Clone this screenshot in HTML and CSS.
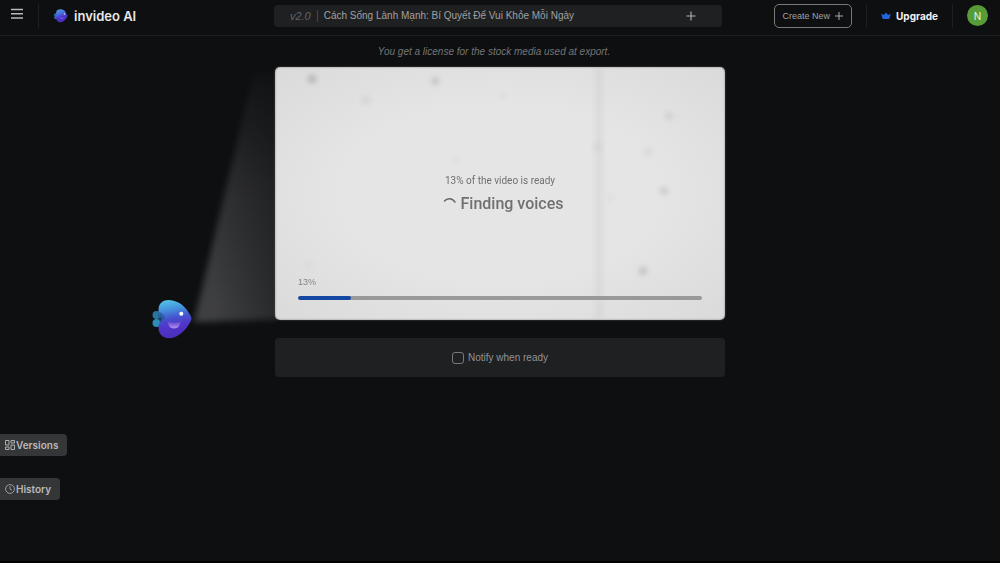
FILE: index.html
```html
<!DOCTYPE html>
<html lang="en">
<head>
<meta charset="utf-8">
<meta name="viewport" content="width=device-width, initial-scale=1">
<title>invideo AI</title>
<link rel="stylesheet" href="styles.css">
</head>
<body>
<div class="page">
  <header class="topbar">
    <div class="topbar-left">
      <button class="icon-button" type="button" aria-label="Menu">
        <svg width="14" height="12" viewBox="0 0 14 12" fill="none" stroke="#b8b9ba" stroke-width="1.4"><path d="M1 1.5h12M1 5.700h12M1 10h12"/></svg>
      </button>
      <span class="divider"></span>
      <a class="brand" href="#">
        <svg width="16" height="16" viewBox="0 0 16 16">
          <defs>
            <linearGradient id="logo" x1="0" y1="0" x2="0.3" y2="1"><stop offset="0" stop-color="#49a6dc"/><stop offset="0.4" stop-color="#4a6fdc"/><stop offset="0.7" stop-color="#4b35c8"/><stop offset="1" stop-color="#4a2fbd"/></linearGradient>
          </defs>
          <circle cx="2.600" cy="7" r="1.800" fill="#236d9e"/><circle cx="2.800" cy="9.500" r="1.800" fill="#2a5fae"/>
          <path d="M3.300 4C3.300 1.800 5.500 1 8 1.200c3 .3 5 2 5 4.200 1.200 1.200 2 2.200 1.200 3.600-.8 1.500-2 2.800-3.700 4.200C8.500 14.600 5.500 14.800 4 12.500 3 11 2.600 9.500 2.800 8 2.800 6.700 3 5.300 3.300 4z" fill="url(#logo)"/>
          <circle cx="11.500" cy="6" r=".7" fill="#dcecff"/><path d="M6.500 9.300q2.400 1.300 4.500 0-.6 1.800-2.300 1.800-1.700 0-2.200-1.800z" fill="#8068e4"/>
        </svg>
        <span>invideo AI</span>
      </a>
    </div>
    <div class="titlebar">
      <span class="version">v2.0</span>
      <span class="title">Cách Sống Lành Mạnh: Bí Quyết Để Vui Khỏe Mỗi Ngày</span>
      <button class="icon-button" type="button" aria-label="Add">
        <svg width="10" height="10" viewBox="0 0 10 10" stroke="#b4b4b5" stroke-width="1.1"><path d="M5 .5v9M.5 5h9"/></svg>
      </button>
    </div>
    <div class="topbar-right">
      <button class="create" type="button">Create New
        <svg width="8" height="8" viewBox="0 0 8 8" stroke="#a9aaab" stroke-width="1"><path d="M4 0v8M0 4h8"/></svg>
      </button>
      <span class="divider"></span>
      <a class="upgrade" href="#">
        <svg width="10" height="8" viewBox="0 0 10 8" fill="#2463dc"><path d="M.3 1.700 2.800 3 5 .4 7.200 3l2.500-1.300-1 4.300a1.400 1.400 0 0 1-1.400 1.100H2.700A1.400 1.400 0 0 1 1.300 6z"/></svg>
        <span>Upgrade</span>
      </a>
      <span class="divider"></span>
      <button class="avatar" type="button">N</button>
    </div>
  </header>

  <div class="workspace">
    <nav class="side">
      <button class="tab" type="button">
        <svg width="10" height="10" viewBox="0 0 10 10" fill="none" stroke="#b0b0b0" stroke-width="1"><path d="M.5.5h3.500v4.500H.5zM.5 7h3.500v2.500H.5zM6 .5h3.500V3H6zM6 5h3.500v4.500H6z"/></svg>Versions
      </button>
      <button class="tab" type="button">
        <svg width="10" height="10" viewBox="0 0 10 10" fill="none" stroke="#a8a8a8" stroke-width=".9"><circle cx="5" cy="5" r="4.400"/><path d="M5 2.300V5l2 1.200"/></svg>History
      </button>
    </nav>

    <main class="main">
      <p class="license">You get a license for the stock media used at export.</p>
      <div class="stage">
        <svg class="projector" width="135" height="285" viewBox="142 60 135 285" aria-hidden="true">
          <defs>
            <linearGradient id="beam" gradientUnits="userSpaceOnUse" x1="205" y1="322" x2="265" y2="70"><stop offset="0" stop-color="#fff" stop-opacity=".21"/><stop offset=".5" stop-color="#fff" stop-opacity=".15"/><stop offset="1" stop-color="#fff" stop-opacity=".02"/></linearGradient>
            <linearGradient id="shade" gradientUnits="userSpaceOnUse" x1="215" y1="0" x2="277" y2="0"><stop offset="0" stop-color="#0e0f11" stop-opacity="0"/><stop offset="1" stop-color="#0e0f11" stop-opacity=".45"/></linearGradient>
            <filter id="soft" x="-20%" y="-10%" width="140%" height="120%" color-interpolation-filters="sRGB"><feGaussianBlur stdDeviation="3"/></filter>
            <linearGradient id="fish" x1=".2" y1="0" x2=".35" y2="1"><stop offset="0" stop-color="#54c3e6"/><stop offset=".25" stop-color="#4593dd"/><stop offset=".5" stop-color="#4550cc"/><stop offset=".72" stop-color="#5033c8"/><stop offset="1" stop-color="#4c2fba"/></linearGradient>
            <linearGradient id="mouth" x1="0" y1="0" x2="0" y2="1"><stop offset="0" stop-color="#5a3bd0"/><stop offset="1" stop-color="#b095ee"/></linearGradient>
          </defs>
          <g filter="url(#soft)"><path d="M194 322 254 72H285V319z" fill="url(#beam)"/></g>
          <path d="M215 60H277V330H215z" fill="url(#shade)"/>
          <circle cx="156.500" cy="315" r="4" fill="#28759d"/><circle cx="156.500" cy="323" r="4" fill="#2d8cb9"/>
          <path d="M158.500 310C158.500 303 163 300 169 300 179 300.500 186 307 189.500 314 191.500 317 192 318 191 320.500 187 329 179 337.500 169.500 338.300 162 338.500 158 333 158.500 326.500 159 323 160.500 321 162 319 159.500 316.500 158.500 313.500 158.500 310z" fill="url(#fish)"/>
          <path d="M158.600 312Q164 313 165 318.500 162.500 319.500 160.500 322.500 157 320 158.600 312z" fill="#1d5992" opacity=".65"/>
          <circle cx="181.300" cy="313.700" r="2" fill="#fff"/>
          <path d="M167.300 321Q174 324.500 180.700 321 180 328.500 174 328.500 168.300 328.500 167.300 321z" fill="url(#mouth)"/>
        </svg>
        <section class="screen">
          <svg class="film" viewBox="275 67 450 253" preserveAspectRatio="none" aria-hidden="true">
            <defs>
              <filter id="blur" x="-100%" y="-100%" width="300%" height="300%" color-interpolation-filters="sRGB"><feGaussianBlur stdDeviation="2.500"/></filter>
              <linearGradient id="scratch" x1="0" y1="0" x2="1" y2="0"><stop offset="0" stop-color="#c4c4c4" stop-opacity="0"/><stop offset=".5" stop-color="#c4c4c4" stop-opacity=".28"/><stop offset="1" stop-color="#c4c4c4" stop-opacity="0"/></linearGradient>
            </defs>
            <rect x="591" y="67" width="16" height="253" fill="url(#scratch)"/>
            <g filter="url(#blur)" fill="#bababa">
              <circle cx="312" cy="79" r="4.500"/><circle cx="435" cy="81" r="4" opacity=".7"/><circle cx="366" cy="100" r="4" opacity=".3"/>
              <circle cx="669" cy="116" r="4" opacity=".4"/><circle cx="648" cy="152" r="4" opacity=".3"/><circle cx="664" cy="191" r="4" opacity=".6"/>
              <circle cx="643" cy="271" r="4.500" opacity=".7"/><circle cx="598" cy="147" r="4" opacity=".25"/><circle cx="456" cy="160" r="3" opacity=".2"/><circle cx="610" cy="198" r="3" opacity=".2"/><circle cx="309" cy="265" r="3" opacity=".2"/><circle cx="503" cy="96" r="3" opacity=".2"/>
            </g>
          </svg>
          <div class="status">
            <p class="ready">13% of the video is ready</p>
            <h1 class="step">
              <svg width="14" height="14" viewBox="0 0 14 14" fill="none" stroke="#666" stroke-width="1.500" stroke-linecap="round"><path d="M1.500 4C4 .8 9 .6 12 5"/></svg>
              <span>Finding voices</span>
            </h1>
          </div>
          <div class="progress">
            <label for="progress">13%</label>
            <progress id="progress" class="bar" value="13" max="100"></progress>
          </div>
        </section>
      </div>
      <label class="notify"><input type="checkbox">Notify when ready</label>
    </main>
  </div>
</div>
</body>
</html>
```
FILE: styles.css
```css
* {
  box-sizing: border-box;
}

body {
  margin: 0;
  background: #0e0f11;
  color: #a0a1a2;
  font-family: "Liberation Sans", Arial, sans-serif;
  font-size: 10px;
}

button {
  font: inherit;
  color: inherit;
  border: 0;
  padding: 0;
  background: none;
}

a {
  color: inherit;
  text-decoration: none;
}

p,
h1 {
  margin: 0;
}

svg {
  display: block;
  flex: none;
}

.page {
  display: flex;
  flex-direction: column;
  min-height: 100vh;
  border-bottom: 2px solid #000;
}

.topbar {
  display: grid;
  grid-template-columns: 1fr 45% 1fr;
  align-items: center;
  height: 36px;
  padding: 0 4px 4px 0;
  border-bottom: 1px solid #1d1e20;
}

.topbar-left,
.topbar-right {
  display: flex;
  align-items: center;
}

.topbar-left {
  gap: 14px;
  padding-left: 10px;
}

.topbar-left .icon-button {
  padding-bottom: 4px;
}

.topbar-right {
  justify-content: flex-end;
  gap: 14px;
  padding-right: 8px;
}

.divider {
  width: 1px;
  height: 24px;
  background: #1e2022;
}

.brand,
.upgrade,
.avatar,
.tab {
  font-family: Inter, "Liberation Sans", sans-serif;
}

.brand {
  display: flex;
  align-items: center;
  gap: 5px;
  color: #e8e8e8;
  font-size: 13px;
  font-weight: 600;
}

.titlebar {
  display: flex;
  align-items: center;
  height: 22px;
  padding: 0 26px 0 16px;
  border-radius: 4px;
  background: #1f2022;
}

.version {
  padding-right: 6px;
  border-right: 1px solid #444547;
  color: #636466;
  font-size: 11px;
  font-style: italic;
}

.title {
  flex: 1;
  padding-left: 6px;
}

.create {
  display: flex;
  align-items: center;
  gap: 5px;
  height: 24px;
  padding: 0 8px;
  border: 1px solid #77787a;
  border-radius: 5px;
  font-size: 9px;
}

.upgrade {
  display: flex;
  align-items: center;
  gap: 5px;
  color: #f2f2f2;
  font-weight: 700;
}

.avatar {
  width: 21px;
  height: 21px;
  border-radius: 50%;
  background: #589c37;
  color: #e7f2e0;
}

.workspace {
  display: grid;
  grid-template-columns: 1fr 45% 1fr;
}

.side {
  display: flex;
  flex-direction: column;
  align-items: flex-start;
  gap: 22px;
  padding-top: 398px;
}

.tab {
  display: flex;
  align-items: center;
  gap: 1px;
  height: 22px;
  padding: 0 9px 0 5px;
  border-radius: 0 4px 4px 0;
  background: #353637;
  color: #b9b9b9;
  font-weight: 600;
}

.license {
  padding: 8px 12px 8px 0;
  color: #747576;
  font-style: italic;
  line-height: 15px;
  text-align: center;
}

.stage {
  position: relative;
}

.projector {
  position: absolute;
  top: -7px;
  right: calc(100% - 2px);
}

.screen {
  position: relative;
  display: flex;
  flex-direction: column;
  aspect-ratio: 450 / 253;
  padding: 0 23px 20px;
  overflow: hidden;
  border-radius: 5px;
  background: radial-gradient(ellipse at 50% 50%, #e5e5e5 50%, #dadada 100%);
  box-shadow: inset 0 0 2px #777, 0 0 2px #555;
}

.film {
  position: absolute;
  inset: 0;
  width: 100%;
  height: 100%;
}

.status {
  position: relative;
  flex: 1;
  display: flex;
  flex-direction: column;
  align-items: center;
  justify-content: center;
  gap: 4px;
  padding-top: 45px;
  color: #707070;
  font-family: Roboto, sans-serif;
}

.ready {
  font-size: 10px;
  line-height: 14px;
}

.step {
  display: flex;
  align-items: center;
  gap: 4px;
  padding-left: 6px;
  font-size: 16px;
  font-weight: 500;
  line-height: 24px;
}

.progress {
  position: relative;
  display: flex;
  flex-direction: column;
  gap: 8px;
  color: #858585;
  font-size: 9px;
  line-height: 11px;
}

.bar {
  appearance: none;
  display: block;
  width: 100%;
  height: 4px;
  border: 0;
  border-radius: 2px;
  overflow: hidden;
  background: #999;
}

.bar::-webkit-progress-bar {
  background: #999;
}

.bar::-webkit-progress-value {
  border-radius: 2px;
  background: #1548a2;
}

.notify {
  display: flex;
  align-items: center;
  justify-content: center;
  gap: 4px;
  height: 39px;
  margin-top: 18px;
  border-radius: 4px;
  background: #1f2022;
  color: #929394;
}

.notify input {
  appearance: none;
  width: 12px;
  height: 12px;
  margin: 0;
  border: 1px solid #77787a;
  border-radius: 3px;
}
```
